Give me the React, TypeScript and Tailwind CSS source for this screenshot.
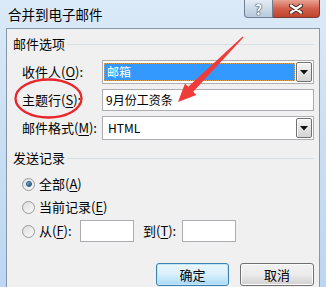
import React from 'react';

const font = { fontFamily: '"Noto Sans CJK SC", "Noto Sans", sans-serif' };

function Key({ k }: { k: string }) {
  return <span className="underline underline-offset-2">{k}</span>;
}

function DropButton() {
  return (
    <div className="w-[16px] h-full border border-[#707070] rounded-[2px] bg-gradient-to-b from-[#f4f4f4] to-[#d4d4d4] flex items-center justify-center shadow-[inset_1px_1px_0_#ffffff]">
      <svg width="8" height="5" viewBox="0 0 8 5">
        <polygon points="0,0 8,0 4,4.5" fill="#111" />
      </svg>
    </div>
  );
}

function Radio({ checked }: { checked?: boolean }) {
  return (
    <div className="w-[13px] h-[13px] rounded-full border border-[#9a9a9a] bg-gradient-to-br from-[#dcdcdc] to-[#fbfbfb] flex items-center justify-center shrink-0">
      {checked && (
        <div className="w-[6px] h-[6px] rounded-full bg-gradient-to-br from-[#8cc4ea] to-[#1a4f7c] border border-[#1d5283]" />
      )}
    </div>
  );
}

function GroupHeader({ title }: { title: string }) {
  return (
    <div className="flex items-center pl-[6px] pr-[5px] h-[16px] text-[13px] text-black">
      <span className="leading-[16px]">{title}</span>
      <div className="flex-1 ml-[2px] h-px bg-[#d5dfe5]" />
    </div>
  );
}

export default function App() {
  return (
    <div
      className="relative w-[326px] h-[287px] overflow-hidden bg-gradient-to-b from-[#dbeaf8] via-[#c9def3] to-[#bcd7f3]"
      style={font}
    >
      {/* Title bar */}
      <div className="h-[28px] flex items-start">
        <div className="pl-[8px] pt-[5px] text-[13.5px] leading-[18px] text-black">合并到电子邮件</div>
        <div className="ml-auto mr-[6px] flex">
          <div className="w-[29px] h-[18px] border border-t-0 border-[#6f7f92] rounded-bl-[4px] bg-gradient-to-b from-[#e3ecf5] to-[#b7c9dc] flex items-center justify-center">
            <span className="text-white font-bold text-[14px] leading-none [text-shadow:0_0_1px_#2f3b48,0_0_1px_#2f3b48,0_0_1px_#2f3b48]">?</span>
          </div>
          <div className="w-[47px] h-[18px] border border-l-0 border-t-0 border-[#7a3b32] rounded-br-[4px] bg-gradient-to-b from-[#e9a293] via-[#d1604c] to-[#c0432f] flex items-center justify-center">
            <svg width="14" height="10" viewBox="0 0 14 10">
              <path d="M2 1.5 L12 8.5 M12 1.5 L2 8.5" stroke="#3a2420" strokeWidth="4.2" strokeLinecap="round" />
              <path d="M2 1.5 L12 8.5 M12 1.5 L2 8.5" stroke="#ffffff" strokeWidth="2.4" strokeLinecap="round" />
            </svg>
          </div>
        </div>
      </div>

      {/* Client area */}
      <div className="mx-[6px] h-[259px] border border-b-0 border-[#8796a7] bg-[#f0f0f0] flex flex-col pt-[7px] text-[13px] text-black">
        <GroupHeader title="邮件选项" />

        <div className="mt-[8px] flex flex-col gap-[5px] pl-[15px] pr-[5px]">
          <div className="flex items-center h-[24px]">
            <div className="w-[80px]">收件人(<Key k="O" />):</div>
            <div className="flex-1 h-full border border-[#abadb3] bg-white flex p-[1px] gap-[1px]">
              <div className="flex-1 my-[1px] bg-[#3399ff] border border-dotted border-[#d9a05b] text-white text-[12px] flex items-center pl-[2px]">邮箱</div>
              <DropButton />
            </div>
          </div>
          <div className="flex items-center h-[22px]">
            <div className="w-[80px]">主题行(<Key k="S" />):</div>
            <div className="flex-1 h-full border border-[#abadb3] bg-white text-[12px] flex items-center pl-[3px]">9月份工资条</div>
          </div>
          <div className="flex items-center h-[24px]">
            <div className="w-[80px]">邮件格式(<Key k="M" />):</div>
            <div className="flex-1 h-full border border-[#abadb3] bg-white flex p-[1px]">
              <div className="flex-1 text-[12px] flex items-center pl-[4px]">HTML</div>
              <DropButton />
            </div>
          </div>
        </div>

        <div className="mt-[10px]">
          <GroupHeader title="发送记录" />
        </div>

        <div className="mt-[8px] flex flex-col gap-[3px] pl-[15px]">
          <div className="flex items-center h-[20px] gap-[4px]">
            <Radio checked />
            <span>全部(<Key k="A" />)</span>
          </div>
          <div className="flex items-center h-[20px] gap-[4px]">
            <Radio />
            <span>当前记录(<Key k="E" />)</span>
          </div>
          <div className="flex items-center h-[22px] gap-[4px]">
            <Radio />
            <span className="w-[37px]">从(<Key k="F" />):</span>
            <div className="w-[54px] h-full border border-[#abadb3] bg-white" />
            <span className="ml-[5px] w-[35px]">到(<Key k="T" />):</span>
            <div className="w-[54px] h-full border border-[#abadb3] bg-white" />
          </div>
        </div>

        <div className="mt-[21px] flex justify-end gap-[11px] pr-[5px]">
          <button className="w-[73px] h-[23px] rounded-[3px] border border-[#3c7fb1] bg-gradient-to-b from-[#eaf6fd] via-[#d9f0fc] to-[#a7d9f5] shadow-[inset_0_0_0_1px_#bfe6f9] text-[13px] leading-none">
            确定
          </button>
          <button className="w-[74px] h-[23px] rounded-[3px] border border-[#707070] bg-gradient-to-b from-[#f2f2f2] via-[#ebebeb] to-[#d0d0d0] shadow-[inset_0_0_0_1px_#fcfcfc] text-[13px] leading-none">
            取消
          </button>
        </div>
      </div>

      {/* Red annotations */}
      <svg className="absolute inset-0 pointer-events-none" width="326" height="287" viewBox="0 0 326 287">
        <ellipse cx="48.5" cy="98.5" rx="33" ry="19" fill="none" stroke="#e8262c" strokeWidth="2.3" />
        <polygon
          points="243.4,37.4 193.2,91.8 196.4,95 178,102 185,83.6 188.2,86.8 242.6,36.6"
          fill="#f03b3b"
        />
      </svg>
    </div>
  );
}
